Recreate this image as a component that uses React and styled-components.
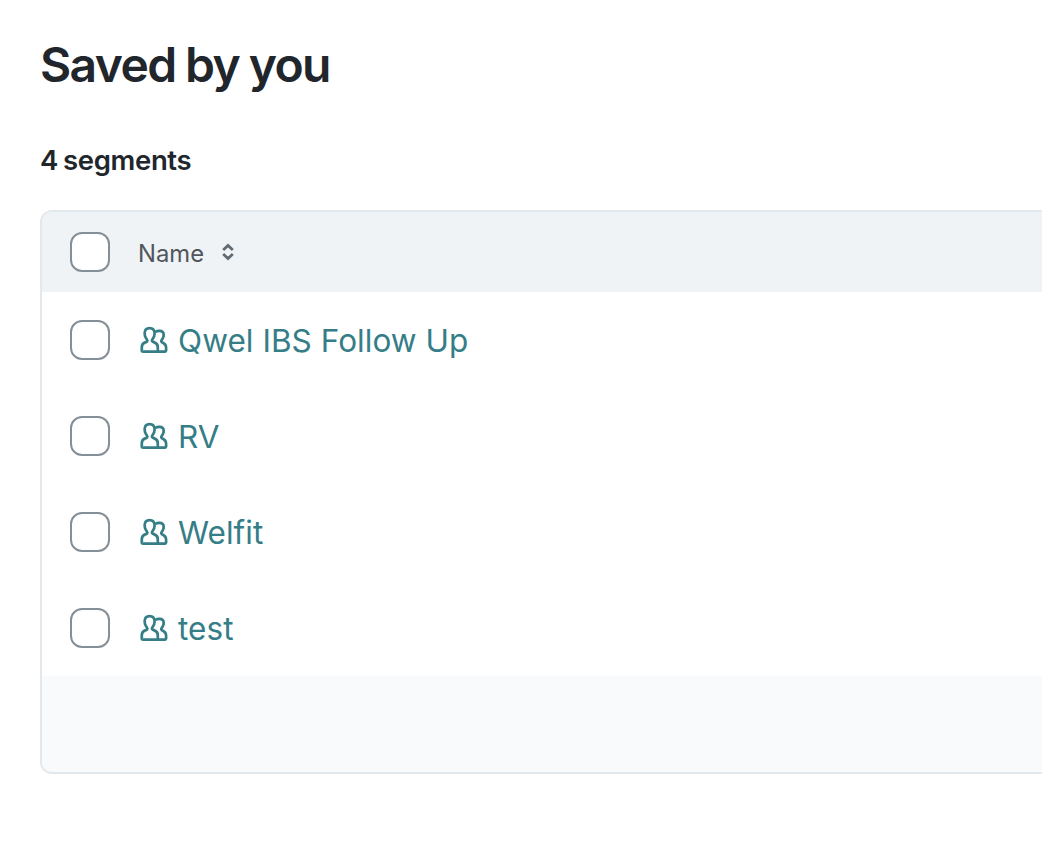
import styled, { createGlobalStyle } from "styled-components";

const segments = ["Qwel IBS Follow Up", "RV", "Welfit", "test"];

function UsersIcon() {
  return (
    <Users viewBox="0 0 28 28" aria-hidden="true">
      <path d="M2.9 25.7C2.1 25.7 1.8 25.3 1.8 24.6V21.2C1.8 18.4 2.9 17.2 5.2 16.4C7.5 15.6 7.9 14.6 6.8 13.3C5.2 11.4 4.6 9.6 4.6 7.4C4.6 4 6.6 2.1 9.6 2.1S14.6 4 14.6 7.4C14.6 9.6 14 11.4 12.4 13.3C11.3 14.6 11.9 15.6 14.2 16.4C16.6 17.2 17.8 18.4 17.8 21.2V25.7" />
      <path d="M3 25.7H25.1C25.8 25.7 26.1 25.3 26.1 24.6V21.8C26.1 19 25.2 17.8 23.2 16.9C21 16 20.8 15 21.8 13.8C23.2 12.2 23.7 10.8 23.7 9C23.7 6.3 22.1 4.8 19.5 4.8C18 4.8 16.5 5 15 6" />
    </Users>
  );
}

function App() {
  return (
    <Page>
      <GlobalStyle />
      <Title>Saved by you</Title>
      <Count>4 segments</Count>
      <Table>
        <HeaderRow>
          <Checkbox type="checkbox" aria-label="Select all" />
          <SortButton>
            <SortLabel>Name</SortLabel>
            <SortIcon viewBox="0 0 12 18" aria-hidden="true">
              <path d="M1.2 6.9L6 2.4L10.8 6.9M1.2 11.1L6 15.6L10.8 11.1" />
            </SortIcon>
          </SortButton>
        </HeaderRow>
        {segments.map((name) => (
          <Row key={name}>
            <Checkbox type="checkbox" aria-label={name} />
            <SegmentLink href="#">
              <UsersIcon />
              <SegmentName>{name}</SegmentName>
            </SegmentLink>
          </Row>
        ))}
        <Footer />
      </Table>
    </Page>
  );
}

const GlobalStyle = createGlobalStyle`
  * {
    box-sizing: border-box;
  }
  body {
    margin: 0;
    background: #fff;
    color: #21262c;
    font-family: Inter, "Liberation Sans", sans-serif;
  }
`;

const Page = styled.main`
  padding: 35px 0 0 40px;
  overflow: hidden;
`;

const Title = styled.h1`
  margin: 0;
  font-size: 48px;
  font-weight: 600;
  line-height: 60px;
  letter-spacing: -1.6px;
  word-spacing: -1px;
`;

const Count = styled.h2`
  margin: 47px 0 32px;
  font-size: 27.5px;
  font-weight: 600;
  line-height: 36px;
  letter-spacing: -0.35px;
  word-spacing: -1.5px;
`;

const Table = styled.section`
  border: 2px solid #e3e8ec;
  border-right: none;
  border-radius: 12px 0 0 12px;
  overflow: hidden;
`;

const Row = styled.div`
  display: flex;
  align-items: center;
  gap: 28px;
  height: 96px;
  padding-left: 28px;
`;

const HeaderRow = styled(Row)`
  height: 80px;
  background: #eff3f6;
`;

const Checkbox = styled.input`
  appearance: none;
  flex: none;
  width: 40px;
  height: 40px;
  margin: 0;
  background: #fff;
  border: 2px solid #858f97;
  border-radius: 12px;
`;

const SortButton = styled.button`
  display: flex;
  align-items: center;
  gap: 18px;
  padding: 0;
  border: none;
  background: none;
  color: #50565b;
  font-family: inherit;
  font-size: 23.8px;
  line-height: 32px;
`;

const SortLabel = styled.span`
  width: 66px;
  padding-top: 4px;
  text-align: left;
`;

const SortIcon = styled.svg`
  width: 12px;
  height: 18px;
  fill: none;
  stroke: #626b72;
  stroke-width: 2.8;
`;

const SegmentLink = styled.a`
  display: flex;
  align-items: center;
  gap: 10px;
  padding-left: 2px;
  color: #357d87;
  text-decoration: none;
`;

const Users = styled.svg`
  width: 28px;
  height: 28px;
  fill: none;
  stroke: currentColor;
  stroke-width: 2.7;
`;

const SegmentName = styled.span`
  font-size: 31.5px;
  line-height: 40px;
  letter-spacing: 0.05px;
  padding-top: 1px;
`;

const Footer = styled.div`
  height: 96px;
  background: #f9fafc;
`;

export default App;
